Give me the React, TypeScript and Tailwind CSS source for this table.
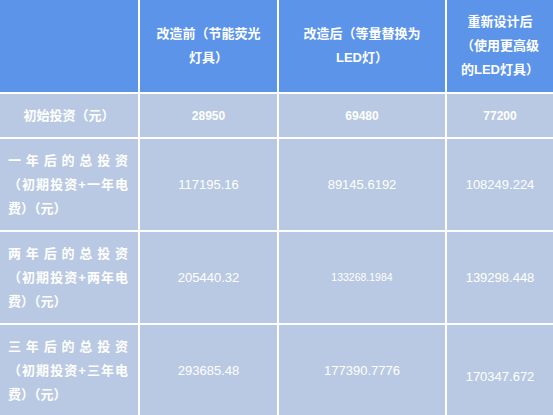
const font = "[font-family:'Liberation_Sans','Noto_Sans_CJK_SC',sans-serif]";

function JLines({ lines }: { lines: string[] }) {
  return (
    <div className="w-full pl-[8px] pr-[10px] text-[13px] leading-[24px] font-bold">
      {lines.map((l, i) => (
        <div
          key={i}
          className={i < lines.length - 1 ? "text-justify [text-align-last:justify]" : "text-left"}
        >
          {l}
        </div>
      ))}
    </div>
  );
}

function Head({ lines }: { lines: string[] }) {
  return (
    <div className="flex items-center justify-center bg-[#5b94e8] text-center text-[13px] font-bold leading-[24px]">
      <div>
        {lines.map((l, i) => (
          <div key={i}>{l}</div>
        ))}
      </div>
    </div>
  );
}

const body = "flex items-center justify-center bg-[#b9c9e3]";

const rows = [
  { label: ["一年后的总投资", "（初期投资+一年电", "费）（元）"], vals: ["117195.16", "89145.6192", "108249.224"] },
  { label: ["两年后的总投资", "（初期投资+两年电", "费）（元）"], vals: ["205440.32", "133268.1984", "139298.448"] },
  { label: ["三年后的总投资", "（初期投资+三年电", "费）（元）"], vals: ["293685.48", "177390.7776", "170347.672"] },
];

export default function App() {
  return (
    <div className={`w-[553px] h-[415px] overflow-hidden bg-white text-white ${font}`}>
      <div className="grid grid-cols-[138px_137px_166px_1fr] grid-rows-[92px_43px_91px_91px_91px] gap-[2px]">
        <div className="bg-[#5b94e8]" />
        <Head lines={["改造前（节能荧光", "灯具）"]} />
        <Head lines={["改造后（等量替换为", "LED灯）"]} />
        <Head lines={["重新设计后", "（使用更高级", "的LED灯具）"]} />

        <div className={`${body} text-[13px] font-bold`}>初始投资（元）</div>
        <div className={`${body} text-[12px] font-bold`}>28950</div>
        <div className={`${body} text-[12px] font-bold`}>69480</div>
        <div className={`${body} text-[12px] font-bold`}>77200</div>

        {rows.map((r, ri) => (
          <div key={ri} className="contents">
            <div className="flex items-center bg-[#b9c9e3]">
              <JLines lines={r.label} />
            </div>
            <div className={`${body} text-[13px]`}>{r.vals[0]}</div>
            <div className={`${body} ${ri === 1 ? "text-[10.5px]" : "text-[13px]"}`}>{r.vals[1]}</div>
            <div className={`${body} text-[13px]`}>
              <span className={ri === 2 ? "mt-[12px]" : ""}>{r.vals[2]}</span>
            </div>
          </div>
        ))}
      </div>
    </div>
  );
}
